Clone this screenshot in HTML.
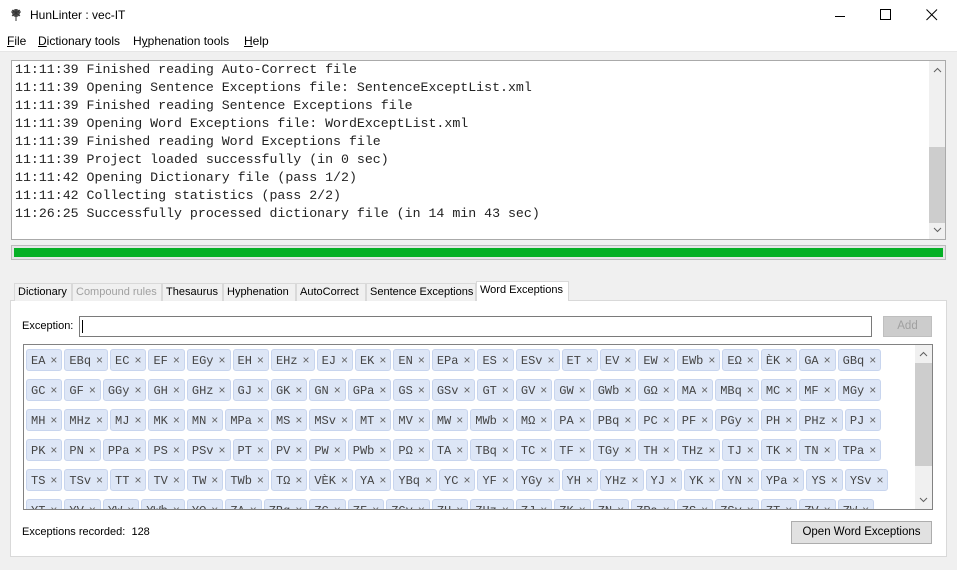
<!DOCTYPE html>
<html><head><meta charset="utf-8"><style>
*{box-sizing:border-box;margin:0;padding:0}
body{width:957px;height:570px;background:#f0f0f0;font-family:"Liberation Sans",sans-serif;font-size:12px;color:#000;position:relative;overflow:hidden}
.abs{position:absolute}
#title{left:0;top:0;width:957px;height:30px;background:#fff}
#menu{left:0;top:30px;width:957px;height:22px;background:#fff;border-bottom:1px solid #e6e6e6}
#menu span{position:absolute;top:4px;font-size:12px}
#log{left:11px;top:60px;width:935px;height:180px;background:#fff;border:1px solid #aaa;overflow:hidden}
#log pre{font-family:"Liberation Mono",monospace;font-size:13.25px;line-height:18px;padding-left:3px;margin-top:0;color:#222}
.sb{position:absolute;background:#f0f0f0}
.thumb{position:absolute;background:#cdcdcd}
#prog{left:11px;top:245px;width:935px;height:15px;border:1px solid #bcbcbc;background:#e6e6e6}
#prog div{position:absolute;left:2px;top:2px;right:2px;bottom:2px;background:#06b025}
.tab{position:absolute;top:283px;height:18px;border:1px solid #d9d9d9;border-bottom:none;background:#f0f0f0;font-size:11px;padding:2px 3px 0;white-space:nowrap}
#panel{left:10px;top:300px;width:937px;height:257px;background:#fff;border:1px solid #d9d9d9}
#chips{left:23px;top:344px;width:910px;height:166px;border:1px solid #828282;background:#fff;overflow:hidden}
.row{position:absolute;left:2px;white-space:nowrap;display:flex;gap:2px}
.c{height:22px;background:#dde6f6;border:1px solid #c8d5ee;border-radius:3px;font-family:"Liberation Mono",monospace;font-size:12px;color:#444;padding:3px 4px 0 4px;line-height:15px}
.c i{font-style:normal;font-family:"Liberation Sans",sans-serif;font-size:12px;color:#666;margin-left:5px}
.btn{position:absolute;border:1px solid #adadad;background:#e1e1e1;text-align:center;font-size:11.5px}
</style></head><body>
<div id="title" class="abs">
<svg class="abs" style="left:8px;top:7px" width="16" height="16" viewBox="0 0 16 16"><circle cx="8" cy="6" r="4" fill="#555"/><path d="M3 5 L13 5 M8 2 V14 M4 9 L12 3 M4 3 L12 9" stroke="#333" stroke-width="1"/></svg>
<span class="abs" style="left:30px;top:8px;font-size:12px">HunLinter : vec-IT</span>
<svg class="abs" style="left:834px;top:10px" width="12" height="12"><path d="M1 6.5 H11" stroke="#000"/></svg>
<svg class="abs" style="left:880px;top:9px" width="12" height="12"><rect x="0.5" y="0.5" width="10" height="10" fill="none" stroke="#000"/></svg>
<svg class="abs" style="left:926px;top:9px" width="12" height="12"><path d="M0.5 0.5 L11 11 M11 0.5 L0.5 11" stroke="#000"/></svg>
</div>
<div id="menu" class="abs">
<span style="left:7px"><u>F</u>ile</span>
<span style="left:38px"><u>D</u>ictionary tools</span>
<span style="left:133px">H<u>y</u>phenation tools</span>
<span style="left:244px"><u>H</u>elp</span>
</div>
<div id="log" class="abs"><pre>11:11:39 Finished reading Auto-Correct file
11:11:39 Opening Sentence Exceptions file: SentenceExceptList.xml
11:11:39 Finished reading Sentence Exceptions file
11:11:39 Opening Word Exceptions file: WordExceptList.xml
11:11:39 Finished reading Word Exceptions file
11:11:39 Project loaded successfully (in 0 sec)
11:11:42 Opening Dictionary file (pass 1/2)
11:11:42 Collecting statistics (pass 2/2)
11:26:25 Successfully processed dictionary file (in 14 min 43 sec)</pre>
<div class="sb" style="left:917px;top:0;width:17px;height:178px"><div class="thumb" style="left:0;top:86px;width:17px;height:76px"></div>
<svg class="abs" style="left:4px;top:6px" width="9" height="6"><path d="M1 5 L4.5 1.5 L8 5" stroke="#606060" fill="none"/></svg>
<svg class="abs" style="left:4px;top:166px" width="9" height="6"><path d="M1 1 L4.5 4.5 L8 1" stroke="#606060" fill="none"/></svg></div>
</div>
<div id="prog" class="abs"><div></div></div>
<div id="panel" class="abs"></div>
<div class="tab" style="left:14px;width:58px">Dictionary</div>
<div class="tab" style="left:72px;width:90px;color:#a0a0a0">Compound rules</div>
<div class="tab" style="left:162px;width:61px">Thesaurus</div>
<div class="tab" style="left:223px;width:73px">Hyphenation</div>
<div class="tab" style="left:296px;width:70px">AutoCorrect</div>
<div class="tab" style="left:366px;width:110px">Sentence Exceptions</div>
<div class="tab" style="left:476px;width:93px;top:281px;height:20px;background:#fff;border-color:#d9d9d9">Word Exceptions</div>
<span class="abs" style="left:22px;top:320px;font-size:11px">Exception:</span>
<div class="abs" style="left:79px;top:316px;width:793px;height:21px;border:1px solid #7a7a7a;background:#fff"><div class="abs" style="left:2px;top:3px;width:1px;height:13px;background:#000"></div></div>
<div class="btn" style="left:883px;top:316px;width:49px;height:21px;color:#a0a0a0;background:#ccc;border-color:#bfbfbf;line-height:19px">Add</div>
<div id="chips" class="abs">
<div class="row" style="top:4px"><span class="c">EA<i>×</i></span><span class="c">EBq<i>×</i></span><span class="c">EC<i>×</i></span><span class="c">EF<i>×</i></span><span class="c">EGy<i>×</i></span><span class="c">EH<i>×</i></span><span class="c">EHz<i>×</i></span><span class="c">EJ<i>×</i></span><span class="c">EK<i>×</i></span><span class="c">EN<i>×</i></span><span class="c">EPa<i>×</i></span><span class="c">ES<i>×</i></span><span class="c">ESv<i>×</i></span><span class="c">ET<i>×</i></span><span class="c">EV<i>×</i></span><span class="c">EW<i>×</i></span><span class="c">EWb<i>×</i></span><span class="c">EΩ<i>×</i></span><span class="c">ÈK<i>×</i></span><span class="c">GA<i>×</i></span><span class="c">GBq<i>×</i></span></div>
<div class="row" style="top:34px"><span class="c">GC<i>×</i></span><span class="c">GF<i>×</i></span><span class="c">GGy<i>×</i></span><span class="c">GH<i>×</i></span><span class="c">GHz<i>×</i></span><span class="c">GJ<i>×</i></span><span class="c">GK<i>×</i></span><span class="c">GN<i>×</i></span><span class="c">GPa<i>×</i></span><span class="c">GS<i>×</i></span><span class="c">GSv<i>×</i></span><span class="c">GT<i>×</i></span><span class="c">GV<i>×</i></span><span class="c">GW<i>×</i></span><span class="c">GWb<i>×</i></span><span class="c">GΩ<i>×</i></span><span class="c">MA<i>×</i></span><span class="c">MBq<i>×</i></span><span class="c">MC<i>×</i></span><span class="c">MF<i>×</i></span><span class="c">MGy<i>×</i></span></div>
<div class="row" style="top:64px"><span class="c">MH<i>×</i></span><span class="c">MHz<i>×</i></span><span class="c">MJ<i>×</i></span><span class="c">MK<i>×</i></span><span class="c">MN<i>×</i></span><span class="c">MPa<i>×</i></span><span class="c">MS<i>×</i></span><span class="c">MSv<i>×</i></span><span class="c">MT<i>×</i></span><span class="c">MV<i>×</i></span><span class="c">MW<i>×</i></span><span class="c">MWb<i>×</i></span><span class="c">MΩ<i>×</i></span><span class="c">PA<i>×</i></span><span class="c">PBq<i>×</i></span><span class="c">PC<i>×</i></span><span class="c">PF<i>×</i></span><span class="c">PGy<i>×</i></span><span class="c">PH<i>×</i></span><span class="c">PHz<i>×</i></span><span class="c">PJ<i>×</i></span></div>
<div class="row" style="top:94px"><span class="c">PK<i>×</i></span><span class="c">PN<i>×</i></span><span class="c">PPa<i>×</i></span><span class="c">PS<i>×</i></span><span class="c">PSv<i>×</i></span><span class="c">PT<i>×</i></span><span class="c">PV<i>×</i></span><span class="c">PW<i>×</i></span><span class="c">PWb<i>×</i></span><span class="c">PΩ<i>×</i></span><span class="c">TA<i>×</i></span><span class="c">TBq<i>×</i></span><span class="c">TC<i>×</i></span><span class="c">TF<i>×</i></span><span class="c">TGy<i>×</i></span><span class="c">TH<i>×</i></span><span class="c">THz<i>×</i></span><span class="c">TJ<i>×</i></span><span class="c">TK<i>×</i></span><span class="c">TN<i>×</i></span><span class="c">TPa<i>×</i></span></div>
<div class="row" style="top:124px"><span class="c">TS<i>×</i></span><span class="c">TSv<i>×</i></span><span class="c">TT<i>×</i></span><span class="c">TV<i>×</i></span><span class="c">TW<i>×</i></span><span class="c">TWb<i>×</i></span><span class="c">TΩ<i>×</i></span><span class="c">VÈK<i>×</i></span><span class="c">YA<i>×</i></span><span class="c">YBq<i>×</i></span><span class="c">YC<i>×</i></span><span class="c">YF<i>×</i></span><span class="c">YGy<i>×</i></span><span class="c">YH<i>×</i></span><span class="c">YHz<i>×</i></span><span class="c">YJ<i>×</i></span><span class="c">YK<i>×</i></span><span class="c">YN<i>×</i></span><span class="c">YPa<i>×</i></span><span class="c">YS<i>×</i></span><span class="c">YSv<i>×</i></span></div>
<div class="row" style="top:154px"><span class="c">YT<i>×</i></span><span class="c">YV<i>×</i></span><span class="c">YW<i>×</i></span><span class="c">YWb<i>×</i></span><span class="c">YΩ<i>×</i></span><span class="c">ZA<i>×</i></span><span class="c">ZBq<i>×</i></span><span class="c">ZC<i>×</i></span><span class="c">ZF<i>×</i></span><span class="c">ZGy<i>×</i></span><span class="c">ZH<i>×</i></span><span class="c">ZHz<i>×</i></span><span class="c">ZJ<i>×</i></span><span class="c">ZK<i>×</i></span><span class="c">ZN<i>×</i></span><span class="c">ZPa<i>×</i></span><span class="c">ZS<i>×</i></span><span class="c">ZSv<i>×</i></span><span class="c">ZT<i>×</i></span><span class="c">ZV<i>×</i></span><span class="c">ZW<i>×</i></span></div>
<div class="sb" style="left:891px;top:0;width:17px;height:164px"><div class="thumb" style="left:0;top:18px;width:17px;height:103px"></div>
<svg class="abs" style="left:4px;top:6px" width="9" height="6"><path d="M1 5 L4.5 1.5 L8 5" stroke="#606060" fill="none"/></svg>
<svg class="abs" style="left:4px;top:152px" width="9" height="6"><path d="M1 1 L4.5 4.5 L8 1" stroke="#606060" fill="none"/></svg></div>
</div>
<span class="abs" style="left:22px;top:526px;font-size:11px">Exceptions recorded:&nbsp;&nbsp;128</span>
<div class="btn" style="left:791px;top:521px;width:141px;height:23px;line-height:21px">Open Word Exceptions</div>
</body></html>
